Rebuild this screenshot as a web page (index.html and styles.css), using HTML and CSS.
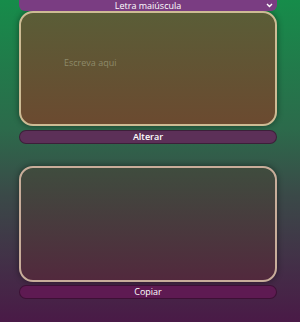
FILE: index.html
```html
<!DOCTYPE html>
<html lang="pt">
<head>
  <meta charset="UTF-8">
  <meta name="viewport" content="width=device-width, initial-scale=1.0">
  <title>Conversor de texto</title>
  <link rel="stylesheet" href="styles.css">
</head>
<body>
  <div class="app">
    <div class="mode-select">
      <span>Letra maiúscula</span>
      <svg class="chevron" width="7" height="5" viewBox="0 0 7 5"><path d="M1 1 L3.5 3.5 L6 1" fill="none" stroke="#fff" stroke-width="1.4"/></svg>
    </div>
    <textarea class="text-box input-box" placeholder="Escreva aqui"></textarea>
    <button class="action-btn alter-btn">Alterar</button>
    <textarea class="text-box output-box" readonly></textarea>
    <button class="action-btn copy-btn">Copiar</button>
  </div>
</body>
</html>
```

FILE: styles.css
```css
* { margin: 0; padding: 0; box-sizing: border-box; }
html, body { height: 100%; }
body {
  font-family: 'Open Sans', 'Noto Sans', Arial, sans-serif;
  background: linear-gradient(to bottom, #168c4a 0%, #2c6a4b 40%, #3a4a48 60%, #4a1a47 100%);
  overflow: hidden;
}
.app {
  display: flex;
  flex-direction: column;
  width: 258px;
  margin-left: 19px;
}
.mode-select {
  position: relative;
  height: 11px;
  background-color: #7a3d82;
  border-radius: 0 0 6px 6px;
  color: #fff;
  font-size: 9px;
  line-height: 11px;
  text-align: center;
}
.chevron { position: absolute; right: 4px; top: 3px; }
.text-box {
  display: block;
  width: 100%;
  resize: none;
  border: 2px solid #cdbb94;
  border-radius: 14px;
  box-shadow: 0 0 6px rgba(0, 0, 0, 0.45);
  padding: 43px 43px;
  font-family: inherit;
  font-size: 9px;
  color: #eee;
  outline: none;
}
.text-box::placeholder { color: #8e8a6a; }
.input-box {
  height: 115px;
  background: linear-gradient(to bottom, #5a5d37, #6b4a30);
}
.output-box {
  height: 116px;
  margin-top: 22px;
  background: linear-gradient(to bottom, #3f4c3e, #52293d);
  border-color: #c8ad9a;
}
.action-btn {
  height: 14px;
  border: 1px solid rgba(0, 0, 0, 0.35);
  border-radius: 7px;
  color: #fff;
  font-family: inherit;
  font-size: 9px;
  line-height: 12px;
  cursor: pointer;
}
.alter-btn { margin-top: 4px; background-color: #5c3058; font-weight: 600; }
.copy-btn { margin-top: 3px; background-color: #5e1a52; }
```
